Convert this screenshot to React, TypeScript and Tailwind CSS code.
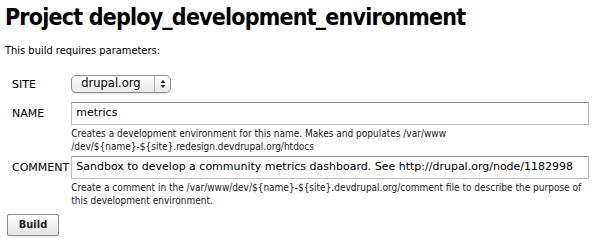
import React from "react";

const font = { fontFamily: '"DejaVu Sans", Verdana, sans-serif' };
const condensed = { fontFamily: '"DejaVu Sans Condensed", "DejaVu Sans", Tahoma, sans-serif' };

function Field({
  label,
  children,
  help,
  labelPad = "pt-[5px]",
  rowPad = "pb-[3px]",
}: {
  label: string;
  children: React.ReactNode;
  help?: React.ReactNode;
  labelPad?: string;
  rowPad?: string;
}) {
  return (
    <tr>
      <td className={`align-top pl-[7px] pr-[2px] text-[11px] leading-[13px] text-black whitespace-nowrap ${labelPad}`}>{label}</td>
      <td className={`align-top ${rowPad}`}>
        {children}
        {help && (
          <div className="mt-[2px] text-[10px] leading-[13px] text-[#222] whitespace-nowrap" style={condensed}>
            {help}
          </div>
        )}
      </td>
    </tr>
  );
}

export default function App() {
  return (
    <div className="bg-white w-[596px] h-[245px] overflow-hidden px-[5px] text-black" style={font}>
      <h1 className="font-bold text-[23px] leading-[30px] pt-[2px] tracking-[-0.8px]" style={condensed}>
        Project deploy_development_environment
      </h1>
      <p className="text-[11px] leading-[13px] mt-[12px]" style={condensed}>
        This build requires parameters:
      </p>
      <table className="mt-[18px] border-collapse">
        <tbody>
          <Field label="SITE" labelPad="pt-[3px]" rowPad="pb-[9px]">
            <div className="w-[100px] h-[18px] rounded-[5px] border border-[#8c8c8c] bg-gradient-to-b from-white to-[#e9e9e9] flex items-center text-[11.5px] shadow-[0_1px_1px_rgba(0,0,0,0.12)]">
              <span className="flex-1 pl-[9px]">drupal.org</span>
              <span className="w-[16px] h-full border-l border-[#b0b0b0] flex items-center justify-center">
                <svg width="6" height="10" viewBox="0 0 6 10">
                  <path d="M3 1 L5.5 4 L0.5 4 Z M3 9 L5.5 6 L0.5 6 Z" fill="#222" />
                </svg>
              </span>
            </div>
          </Field>
          <Field
            label="NAME"
            help={
              <>
                Creates a development environment for this name. Makes and populates /var/www
                <br />
                /dev/${"{"}name{"}"}-${"{"}site{"}"}.redesign.devdrupal.org/htdocs
              </>
            }
          >
            <div className="w-[518px] h-[23px] border border-[#bdbdbd] border-t-[#8a8a8a] px-[4px] flex items-center text-[11px]">
              metrics
            </div>
          </Field>
          <Field
            label="COMMENT"
            help={
              <>
                Create a comment in the /var/www/dev/${"{"}name{"}"}-${"{"}site{"}"}.devdrupal.org/comment file to describe the purpose of
                <br />
                this development environment.
              </>
            }
          >
            <div className="w-[518px] h-[23px] border border-[#bdbdbd] border-t-[#8a8a8a] px-[4px] flex items-center text-[11px] whitespace-nowrap overflow-hidden">
              Sandbox to develop a community metrics dashboard. See http://drupal.org/node/1182998
            </div>
          </Field>
        </tbody>
      </table>
      <button
        className="mt-[4px] ml-[2px] w-[52px] h-[22px] border border-[#8c8c8c] rounded-[2px] bg-gradient-to-b from-white to-[#e4e4e4] text-[11px] font-bold text-[#222] shadow-[0_1px_1px_rgba(0,0,0,0.1)]"
        style={condensed}
      >
        Build
      </button>
    </div>
  );
}
